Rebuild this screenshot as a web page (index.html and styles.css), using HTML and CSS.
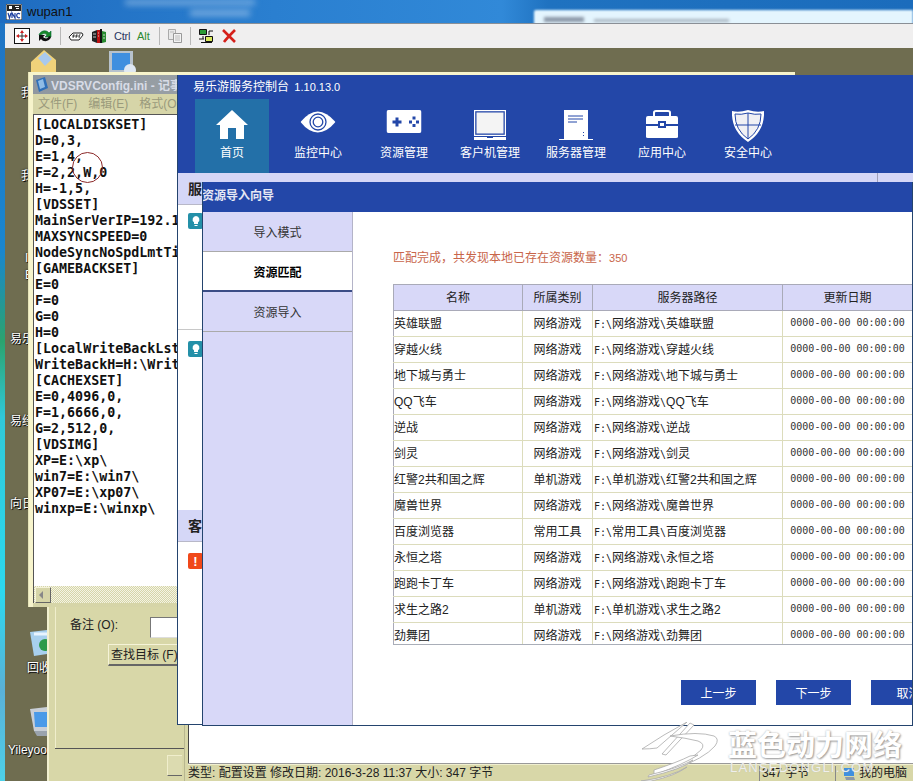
FILE: index.html
```html
<!DOCTYPE html>
<html lang="zh">
<head>
<meta charset="utf-8">
<title>wupan1</title>
<link rel="stylesheet" href="styles.css">
</head>
<body>
<div class="screen">
  <header class="vnc-title">
    <svg class="vnc-logo" viewBox="0 0 16 16" width="16" height="16"><rect width="16" height="16" fill="#fff" stroke="#222"/><path d="M1 1h14v6H1z" fill="#222"/><path d="M3 2h3v3H3zM9 2h4v1H9zM10 4h3v1h-3z" fill="#fff"/><path d="M2 9l1.500 5L5 9M6 14V9l3 5V9M14 10c-2-1.500-4 0-3 2.500 .5 1.500 2 1.500 3 1" fill="none" stroke="#1c3fa0" stroke-width="1.200"/></svg>
    <span class="vnc-name">wupan1</span>
    <span class="blur-a"></span><span class="blur-b"></span>
    <div class="blur-panel"><span></span><span class="wide"></span></div>
  </header>
  <div class="vnc-body">
    <div class="strip"></div>
    <div class="vnc-main">
      <nav class="toolbar">
        <svg class="tb" viewBox="0 0 16 16"><rect x=".5" y=".5" width="15" height="15" fill="#fff" stroke="#111"/><path d="M8 2l2 3H6zM8 14l-2-3h4zM2 8l3-2v4zM14 8l-3 2V6z" fill="#d02020"/><path d="M8 5v6M5 8h6" stroke="#333"/></svg>
        <svg class="tb" viewBox="0 0 16 16"><path d="M2 7c1-4 7-6 10-2l2-2v6H8l2-2C8 5 5 5 4 8z" fill="#1b8a2a" stroke="#063" stroke-width=".6"/><path d="M14 9c-1 4-7 6-10 2l-2 2V7h6L6 9c2 2 5 2 6-1z" fill="#111"/></svg>
        <i class="sep"></i>
        <svg class="tb" viewBox="0 0 16 16"><path d="M1 9l4-4h9l1 2-4 5H3z" fill="#fff" stroke="#222"/><path d="M4 8h7M6 6l-1 4M9 6l-1 4M12 6l-1 4" stroke="#222" stroke-width=".8"/></svg>
        <svg class="tb" viewBox="0 0 16 16"><path d="M1 4l5-2v13l-5-2z" fill="#222"/><path d="M6 2h3v13H6z" fill="#b11"/><path d="M9 1h2v14H9z" fill="#111"/><path d="M11 3l4 1v10l-4 1z" fill="#2a8a30"/><path d="M2 6h3M2 9h3M7 5h1M7 8h1M12 7h2M12 10h2" stroke="#eee" stroke-width=".8"/></svg>
        <span class="key key-ctrl">Ctrl</span>
        <span class="key key-alt">Alt</span>
        <i class="sep"></i>
        <svg class="tb" viewBox="0 0 16 16"><path d="M1.500 1.500h7v10h-7z" fill="#e8e8e8" stroke="#aaa"/><path d="M6.500 5.500h8v9h-8z" fill="#f3f3f3" stroke="#999"/><path d="M8 8h5M8 10h5M8 12h5M3 4h4" stroke="#bbb"/></svg>
        <i class="sep"></i>
        <svg class="tb" viewBox="0 0 16 16"><path d="M1.500 1.500h7v5h-7z" fill="#2a9a35" stroke="#111"/><path d="M7.500 8.500h7v5h-7z" fill="#d8e85a" stroke="#111"/><path d="M1 11h5M11 3h4M11 3v4M5 8v3" stroke="#111"/><path d="M3 14h11v1H3z" fill="#111"/></svg>
        <svg class="tb" viewBox="0 0 16 16"><path d="M2 2l12 12M14 2C10 6 6 10 3 14" stroke="#d5201a" stroke-width="2.600" fill="none"/></svg>
      </nav>
      <div class="remote"></div>
    </div>
  </div>

  <div class="desk-icon di-mail"><svg viewBox="0 0 27 22" width="27" height="22"><path d="M1 12L14 0l12 10v12H1z" fill="#f0d27a"/><path d="M8 8l7-6 7 7-7 7z" fill="#a9c9ee"/></svg></div>
  <div class="desk-icon di-pc"><svg viewBox="0 0 28 22" width="28" height="22"><rect x="1" y="1" width="24" height="21" fill="#b7c2cc"/><rect x="4" y="3" width="18" height="17" fill="#3f8fdf"/><circle cx="22" cy="20" r="6" fill="#dfe8f2"/></svg></div>
  <span class="desk-label dl-1">我</span>
  <span class="desk-label dl-2">我</span>
  <span class="desk-label dl-3">I<br>E</span>
  <span class="desk-label dl-4">易乐</span>
  <span class="desk-label dl-5">易经</span>
  <span class="desk-label dl-6">向日</span>
  <div class="desk-icon di-bin"><svg viewBox="0 0 17 26" width="17" height="26"><path d="M0 2l17-2v24l-13 2z" fill="#a8d0ee"/><circle cx="15" cy="15" r="6" fill="#2c9a4a"/><path d="M4 4h13" stroke="#e8f4ff" stroke-width="3"/></svg></div>
  <span class="desk-label dl-7">回收</span>
  <div class="desk-icon di-pc2"><svg viewBox="0 0 17 30" width="17" height="30"><path d="M0 2l17-2v24H4z" fill="#c8ced6"/><path d="M4 5h13v15H5z" fill="#4a9ae8"/><path d="M4 24h13v5H7z" fill="#9aa3ad"/></svg></div>
  <span class="desk-label dl-8">YileyooC</span>

  <section class="find-dialog">
    <div class="fd-row">
      <label class="fd-label">备注 (O):</label>
      <span class="fd-input"></span>
    </div>
    <button class="fd-btn">查找目标 (F)</button>
    <div class="fd-rule"></div>
    <span class="fd-small"></span>
  </section>

  <section class="explorer">
    <div class="ex-white"></div>
    <footer class="ex-status">
      <span class="ex-s1">类型: 配置设置 修改日期: 2016-3-28 11:37 大小: 347 字节</span>
      <span class="ex-s2">347 字节</span>
      <span class="ex-s3"><svg viewBox="0 0 14 14" width="14" height="14"><rect x="2" y="1" width="10" height="8" fill="#3f8fdf"/><path d="M3 10h9l1 3H4z" fill="#8a98a8"/></svg>我的电脑</span>
    </footer>
  </section>

  <section class="notepad">
    <div class="np-title"><svg viewBox="0 0 13 15" width="13" height="15"><path d="M1 3l9-3 3 11-9 4z" fill="#2f6fb8"/><path d="M3 4l5-2 2 8-5 2z" fill="#8fbce6"/></svg><span>VDSRVConfig.ini - 记事</span></div>
    <div class="np-menu"><span>文件(F)</span><span>编辑(E)</span><span>格式(O)</span></div>
    <pre class="np-text">[LOCALDISKSET]
D=0,3,
E=1,4,
F=2,2,W,0
H=-1,5,
[VDSSET]
MainSerVerIP=192.1
MAXSYNCSPEED=0
NodeSyncNoSpdLmtTi
[GAMEBACKSET]
E=0
F=0
G=0
H=0
[LocalWriteBackLst
WriteBackH=H:\Writ
[CACHEXSET]
E=0,4096,0,
F=1,6666,0,
G=2,512,0,
[VDSIMG]
XP=E:\xp\
win7=E:\win7\
XP07=E:\xp07\
winxp=E:\winxp\</pre>
    <div class="np-scroll"><span class="np-arrow"></span></div>
  </section>
  <div class="ring"></div>

  <section class="console">
    <header class="con-head">
      <div class="con-title">易乐游服务控制台 <span>1.10.13.0</span></div>
      <nav class="con-nav">
        <a class="nav-item active"><svg viewBox="0 0 32 30" width="32" height="30"><path d="M16 0l16 15h-4v14h-8V18h-8v11H4V15H0z" fill="#fff"/></svg><span>首页</span></a>
        <a class="nav-item"><svg viewBox="0 0 35 24" width="35" height="24"><path d="M0 12Q17-9 35 12 17 33 0 12z" fill="#fff"/><circle cx="17.500" cy="12" r="8" fill="none" stroke="#2347a8" stroke-width="1.300"/><circle cx="17.500" cy="12" r="4.800" fill="none" stroke="#2347a8" stroke-width="1.300"/></svg><span>监控中心</span></a>
        <a class="nav-item"><svg viewBox="0 0 35 23" width="35" height="23"><rect width="35" height="23" rx="2" fill="#fff"/><path d="M6 10.500h3V7.500h3v3h3v3h-3v3H9v-3H6z" fill="#2347a8"/><path d="M26 6.500h3v3h-3zM26 14h3v3h-3zM22.500 10.500h3v3h-3zM29.500 10.500h3v3h-3z" fill="#2347a8"/></svg><span>资源管理</span></a>
        <a class="nav-item"><svg viewBox="0 0 32 30" width="32" height="30"><rect x=".6" y=".6" width="30.800" height="24.800" fill="none" stroke="#fff" stroke-width="1.200"/><rect x="2.500" y="2.500" width="27" height="21" fill="#f4f4f4"/><path d="M0 27h13v1h6v-1h13v3H0z" fill="#fff"/></svg><span>客户机管理</span></a>
        <a class="nav-item"><svg viewBox="0 0 34 30" width="34" height="30"><path d="M5 0h24v29H5z" fill="#fff"/><path d="M0 29h34v1H0z" fill="#fff"/><path d="M9 6h15M9 9h15M9 12h9" stroke="#2347a8"/><path d="M24 22h1v1h-1zM24 25h1v1h-1z" fill="#2347a8"/></svg><span>服务器管理</span></a>
        <a class="nav-item"><svg viewBox="0 0 32 29" width="32" height="29"><path d="M8 7V2.500Q8 1 10 1h12q2 0 2 1.500V7" fill="none" stroke="#fff" stroke-width="2"/><path d="M2 6h28q2 0 2 2v6H0V8q0-2 2-2zM0 16h32v11q0 1-2 1H2q-2 0-2-1z" fill="#fff"/><path d="M12 11h8v7h-8z" fill="#2347a8"/><path d="M14 13h4v3h-4z" fill="#fff"/></svg><span>应用中心</span></a>
        <a class="nav-item"><svg viewBox="0 0 32 32" width="32" height="32"><path d="M16 0q9 3 16 1 1 20-16 31Q-1 21 0 1q7 2 16-1z" fill="#fff"/><path d="M16 3q7 2 13 1 0 16-13 25Q3 20 3 4q6 1 13-1z" fill="#f0f0f4" stroke="#2347a8" stroke-width="1"/><path d="M16 3v26M3 15h26" stroke="#2347a8" stroke-width="1"/></svg><span>安全中心</span></a>
      </nav>
    </header>
    <div class="con-section first">
      <h2 class="con-h">服</h2>
      <div class="con-row r1"><span class="badge teal"><svg viewBox="0 0 14 16" width="14" height="16"><path d="M7 3a3.500 3.500 0 0 1 2 6.300V11H5V9.300A3.500 3.500 0 0 1 7 3zM5.500 12h3v1h-3z" fill="#fff"/></svg></span></div>
      <div class="con-row r2"><span class="badge teal"><svg viewBox="0 0 14 16" width="14" height="16"><path d="M7 3a3.500 3.500 0 0 1 2 6.300V11H5V9.300A3.500 3.500 0 0 1 7 3zM5.500 12h3v1h-3z" fill="#fff"/></svg></span></div>
    </div>
    <div class="con-section">
      <h2 class="con-h">客</h2>
      <div class="con-row r3"><span class="badge orange">!</span></div>
    </div>
  </section>

  <section class="wizard">
    <div class="wz-title">资源导入向导</div>
    <div class="wz-body">
      <aside class="wz-side">
        <div class="wz-step">导入模式</div>
        <div class="wz-step on">资源匹配</div>
        <div class="wz-step">资源导入</div>
      </aside>
      <main class="wz-main">
        <p class="wz-msg">匹配完成，共发现本地已存在资源数量：<span>350</span></p>
        <div class="tbl-wrap">
          <table class="tbl">
            <thead><tr><th class="c1">名称</th><th class="c2">所属类别</th><th class="c3">服务器路径</th><th class="c4">更新日期</th></tr></thead>
            <tbody>
              <tr><td>英雄联盟</td><td class="ctr">网络游戏</td><td><i>F:\</i>网络游戏<i>\</i>英雄联盟</td><td class="dt">0000-00-00 00:00:00</td></tr>
              <tr><td>穿越火线</td><td class="ctr">网络游戏</td><td><i>F:\</i>网络游戏<i>\</i>穿越火线</td><td class="dt">0000-00-00 00:00:00</td></tr>
              <tr><td>地下城与勇士</td><td class="ctr">网络游戏</td><td><i>F:\</i>网络游戏<i>\</i>地下城与勇士</td><td class="dt">0000-00-00 00:00:00</td></tr>
              <tr><td>QQ飞车</td><td class="ctr">网络游戏</td><td><i>F:\</i>网络游戏<i>\</i>QQ飞车</td><td class="dt">0000-00-00 00:00:00</td></tr>
              <tr><td>逆战</td><td class="ctr">网络游戏</td><td><i>F:\</i>网络游戏<i>\</i>逆战</td><td class="dt">0000-00-00 00:00:00</td></tr>
              <tr><td>剑灵</td><td class="ctr">网络游戏</td><td><i>F:\</i>网络游戏<i>\</i>剑灵</td><td class="dt">0000-00-00 00:00:00</td></tr>
              <tr><td>红警2共和国之辉</td><td class="ctr">单机游戏</td><td><i>F:\</i>单机游戏<i>\</i>红警2共和国之辉</td><td class="dt">0000-00-00 00:00:00</td></tr>
              <tr><td>魔兽世界</td><td class="ctr">网络游戏</td><td><i>F:\</i>网络游戏<i>\</i>魔兽世界</td><td class="dt">0000-00-00 00:00:00</td></tr>
              <tr><td>百度浏览器</td><td class="ctr">常用工具</td><td><i>F:\</i>常用工具<i>\</i>百度浏览器</td><td class="dt">0000-00-00 00:00:00</td></tr>
              <tr><td>永恒之塔</td><td class="ctr">网络游戏</td><td><i>F:\</i>网络游戏<i>\</i>永恒之塔</td><td class="dt">0000-00-00 00:00:00</td></tr>
              <tr><td>跑跑卡丁车</td><td class="ctr">网络游戏</td><td><i>F:\</i>网络游戏<i>\</i>跑跑卡丁车</td><td class="dt">0000-00-00 00:00:00</td></tr>
              <tr><td>求生之路2</td><td class="ctr">单机游戏</td><td><i>F:\</i>单机游戏<i>\</i>求生之路2</td><td class="dt">0000-00-00 00:00:00</td></tr>
              <tr><td>劲舞团</td><td class="ctr">网络游戏</td><td><i>F:\</i>网络游戏<i>\</i>劲舞团</td><td class="dt">0000-00-00 00:00:00</td></tr>
            </tbody>
          </table>
        </div>
        <div class="wz-btns"><button>上一步</button><button>下一步</button><button>取消</button></div>
      </main>
    </div>
  </section>

  <div class="watermark">
    <svg class="wm-logo" viewBox="0 0 82 60" width="82" height="60"><g fill="#fff" stroke="#aaa" stroke-width=".8"><path d="M47 0L24 13 2 27q8 0 15-1z"/><path d="M50 1L22 32l4 1L54 3z"/><path d="M30 14q28-5 44 0 6 3 1 10-10 12-42 24l-12 2q30-12 40-22 5-6-3-9-12-3-28-5z"/><path d="M14 48q24-8 36-14l8-1q-14 9-44 20z"/><path d="M9 53q30-7 44-15-10 9-45 17z"/><path d="M1 59q30-4 46-14-12 9-36 14z"/></g></svg>
    <div class="wm-text">
      <strong>蓝色动力网络</strong>
      <span>LANSEDONGLI.COM</span>
    </div>
  </div>
</div>
</body>
</html>
```

FILE: styles.css
```css
* { box-sizing: border-box; }
html, body { margin: 0; padding: 0; }
body { font: 12px "Liberation Sans", "Noto Sans CJK SC", sans-serif; color: #222; }
.screen { position: relative; width: 913px; height: 781px; overflow: hidden; display: flex; flex-direction: column; background: #6f6d50; }

/* VNC frame */
.vnc-title { position: relative; flex: none; height: 23px; display: flex; align-items: center; gap: 5px; padding-left: 6px; background: linear-gradient(90deg, #1f6cc0 0, #2a7fd0 30%, #3189d8 55%, #1f72c0 60%, #1b6cbc 100%); overflow: hidden; }
.vnc-logo { flex: none; }
.vnc-name { font-size: 13px; color: #111; }
.blur-a, .blur-b { position: absolute; background: rgba(190,215,240,.55); filter: blur(3px); }
.blur-a { left: 125px; top: 0; width: 130px; height: 5px; }
.blur-b { left: 190px; top: 10px; width: 60px; height: 6px; }
.blur-panel { position: absolute; left: 534px; top: 10px; right: 0; height: 16px; background: #e4f5fe; border-radius: 2px 0 0 0; filter: blur(1px); }
.blur-panel span { position: absolute; left: 10px; top: 7px; width: 40px; height: 5px; background: #8c98a8; filter: blur(1px); }
.blur-panel .wide { left: 60px; width: 135px; height: 3px; top: 9px; background: #a8b4c0; }
.vnc-body { flex: 1; display: flex; min-height: 0; }
.strip { flex: none; width: 5px; background: linear-gradient(180deg, #1f74c4 0, #1a86cf 30%, #2ba36e 42%, #30c8d8 52%, #2cd8ee 75%, #5ab0d8 88%, #4dd0e8 100%); }
.vnc-main { flex: 1; display: flex; flex-direction: column; min-width: 0; }
.toolbar { flex: none; height: 25px; display: flex; align-items: center; gap: 7px; padding-left: 9px; background: #f0efef; border-top: 1px solid #8a8f96; }
.tb { width: 16px; height: 16px; flex: none; }
.sep { flex: none; width: 1px; height: 18px; background: #b8b8b8; }
.key { font-size: 11px; flex: none; }
.key-ctrl { width: 16px; color: #2a3560; letter-spacing: -.2px; }
.key-alt { width: 15px; color: #2c8a30; }
.remote { flex: 1; background: #6f6d50; }

/* Desktop items */
.desk-icon { position: absolute; line-height: 0; }
.di-mail { left: 30px; top: 50px; }
.di-pc { left: 108px; top: 50px; }
.di-bin { left: 30px; top: 630px; }
.di-pc2 { left: 30px; top: 707px; }
.desk-label { position: absolute; color: #fff; white-space: nowrap; text-shadow: 1px 1px 0 #111, 0 0 2px #111; line-height: 17px; }
.dl-1 { left: 21px; top: 85px; }
.dl-2 { left: 21px; top: 168px; }
.dl-3 { left: 25px; top: 250px; }
.dl-4 { left: 10px; top: 331px; }
.dl-5 { left: 10px; top: 413px; }
.dl-6 { left: 10px; top: 496px; }
.dl-7 { left: 27px; top: 660px; }
.dl-8 { left: 8px; top: 742px; }

/* Dialog behind notepad */
.find-dialog { position: absolute; left: 47px; top: 600px; width: 140px; height: 190px; background: #d8d7a8; border-left: 2px solid #f2f0d0; padding: 17px 0 0 21px; }
.fd-row { display: flex; align-items: flex-start; height: 21px; gap: 36px; }
.fd-label { width: 44px; line-height: 16px; white-space: nowrap; color: #222; }
.fd-input { width: 40px; height: 21px; background: #fff; border: 1px solid #777; border-right: 0; border-bottom-color: #ddd; flex: none; }
.fd-btn { display: block; margin: 6px 0 0 38px; width: 80px; height: 22px; padding: 0 0 2px 2px; text-align: left; font: 12px "Liberation Sans", "Noto Sans CJK SC", sans-serif; color: #222; background: #d8d7a8; border: 0; border-top: 1px solid #f5f3d8; border-left: 1px solid #f5f3d8; border-bottom: 2px solid #666; white-space: nowrap; }
.fd-rule { position: absolute; left: 6px; right: 2px; top: 148px; height: 1px; background: #555; }
.find-dialog::before { content: ""; position: absolute; left: 6px; top: 0; height: 148px; width: 1px; background: #f0eecc; }
.fd-small { position: absolute; left: 118px; top: 155px; width: 15px; height: 21px; background: #dcdbb0; border: 1px solid #f0eecc; border-bottom: 1px solid #666; border-right: 0; }

/* Explorer behind */
.explorer { position: absolute; left: 184px; top: 640px; width: 729px; height: 141px; display: flex; flex-direction: column; background: #d8d7a8; padding-left: 3px; border-left: 1px solid #b8b790; }
.ex-white { flex: 1; background: #fff; border-left: 1px solid #444; }
.ex-status { flex: none; height: 18px; display: flex; align-items: flex-start; padding-top: 2px; border-top: 1px solid #999; box-shadow: inset 0 1px 0 #f0efd0; white-space: nowrap; color: #222; line-height: 15px; overflow: hidden; }
.ex-s1 { width: 571px; }
.ex-s2 { width: 76px; padding-left: 2px; border-left: 1px solid #888; }
.ex-s3 { display: flex; align-items: center; gap: 3px; padding-left: 6px; border-left: 1px solid #888; }

/* Notepad */
.notepad { position: absolute; left: 29px; top: 72px; width: 766px; height: 535px; display: flex; flex-direction: column; background: #d6d5a8; border: 1px solid #f7f4cc; border-width: 3px 0 0 4px; box-shadow: -1px 0 0 #e6e4b8; padding-bottom: 4px; }
.np-title { flex: none; height: 19px; display: flex; align-items: center; gap: 3px; padding-left: 2px; background: linear-gradient(90deg, #8f97a0, #aab0ae 60%); color: #d8dce6; font-weight: 700; font-size: 12px; white-space: nowrap; }
.np-menu { flex: none; height: 20px; display: flex; align-items: center; gap: 11px; padding: 0 0 3px 5px; color: #9a9a7c; }
.np-text { flex: 1; margin: 0; padding: 2px 0 0 1px; background: #fff; border-top: 1px solid #555; border-left: 1px solid #555; font: 700 13.33px/16px "DejaVu Sans Mono", monospace; color: #111; overflow: hidden; }
.np-scroll { flex: none; height: 17px; display: flex; align-items: center; padding-left: 1px; border-left: 1px solid #555; background: repeating-conic-gradient(#d6d5a8 0 25%, #f4f4e4 0 50%) 0 0 / 2px 2px; }
.np-arrow { position: relative; width: 16px; height: 16px; background: #d6d5a8; border: 1px solid #f5f3d8; border-right-color: #666; border-bottom-color: #666; }
.np-arrow::after { content: ""; position: absolute; left: 3px; top: 3px; border: 4px solid transparent; border-right-color: #888; border-left: 0; }
.ring { position: absolute; left: 72px; top: 152px; width: 31px; height: 31px; border: 1px solid #8c2a2a; border-radius: 50%; }

/* Console */
.console { position: absolute; left: 177px; top: 75px; width: 736px; height: 650px; display: flex; flex-direction: column; background: #fff; border-left: 1px solid #24446e; border-bottom: 1px solid #24446e; }
.con-head { flex: none; height: 98px; padding: 5px 0 0 15px; background: #2347a8; color: #fff; }
.con-title { height: 14px; line-height: 14px; white-space: nowrap; }
.con-title span { font-size: 11px; margin-left: 2px; }
.con-nav { display: grid; grid-template-columns: repeat(7, 74px); column-gap: 12px; margin: 5px 0 0 2px; }
.nav-item { height: 74px; display: flex; flex-direction: column; align-items: center; justify-content: flex-end; color: #fff; white-space: nowrap; position: relative; padding-bottom: 13px; }
.nav-item svg { position: absolute; left: 50%; top: 11px; transform: translateX(-50%); }
.nav-item.active { background: #2370a8; }
.con-section.first { height: 337px; }
.con-h { position: relative; margin: 0; height: 32px; padding-left: 10px; background: #d5d7f7; border-bottom: 1px solid #b8b8c8; font: 700 14px/30px "Noto Sans CJK SC", sans-serif; color: #222; white-space: nowrap; }
.first .con-h::after { content: ""; position: absolute; left: 699px; top: 0; width: 1px; height: 9px; background: #a0a0b8; }
.con-row { padding: 8px 0 0 10px; }
.r1 { height: 125px; border-bottom: 1px solid #c8c8c8; }
.r2 { padding-top: 11px; }
.r3 { padding-top: 11px; }
.badge { display: flex; align-items: center; justify-content: center; width: 15px; height: 16px; border-radius: 2px; color: #fff; font-weight: 700; font-size: 13px; }
.teal { background: #2490a8; }
.orange { background: #f0481a; }

/* Wizard */
.wizard { position: absolute; left: 202px; top: 182px; width: 711px; height: 544px; display: flex; flex-direction: column; background: #fff; border-left: 1px solid #24446e; border-right: 1px solid #24446e; border-bottom: 1px solid #24446e; overflow: hidden; }
.wz-title { flex: none; height: 30px; line-height: 29px; background: #2347a8; color: #e6e8f4; font-weight: 700; white-space: nowrap; margin-left: -1px; }
.wz-body { flex: 1; display: flex; min-height: 0; }
.wz-side { flex: none; width: 150px; background: #d8d8f8; border-right: 1px solid #b4b4c8; }
.wz-step { height: 40px; line-height: 43px; text-align: center; border-bottom: 1px solid #aaa; color: #333; overflow: hidden; }
.wz-step.on { background: #fff; color: #000; font-weight: 700; border-bottom: 2px solid #3b4d86; }
.wz-main { flex: none; width: 559px; padding: 39px 0 0 40px; }
.wz-msg { margin: 0 0 19px; height: 14px; line-height: 14px; color: #c8654a; white-space: nowrap; }
.wz-msg span { font-size: 11px; }
.tbl-wrap { width: 519px; height: 361px; overflow: hidden; border-bottom: 1px solid #a9aeb8; }
.tbl { table-layout: fixed; width: 519px; border-collapse: collapse; }
.c1 { width: 129px; }
.c2 { width: 70px; }
.c3 { width: 190px; }
.c4 { width: 130px; }
.tbl th { height: 26px; padding: 0 0 2px; background: #d8d8f8; border: 1px solid #a9aab8; font-weight: 400; color: #222; }
.tbl td { height: 26px; padding: 0 0 2px 0; background: #fff; border: 1px solid #dcdcbc; white-space: nowrap; overflow: hidden; color: #222; }
.tbl td:first-child { border-left-color: #a9aab8; }
.tbl .ctr { text-align: center; }
.tbl i { font: 10px "DejaVu Sans Mono", monospace; }
.tbl td:nth-child(3) { padding-left: 1px; }
.tbl .dt { text-align: center; font: 10px "DejaVu Sans Mono", monospace; color: #333; }
.wz-btns { display: flex; gap: 20px; margin: 35px 0 0 288px; width: 300px; }
.wz-btns button { flex: none; width: 75px; height: 25px; padding: 0; border: 0; background: #2347a8; color: #fff; font: 12px "Liberation Sans", "Noto Sans CJK SC", sans-serif; }

/* Watermark */
.watermark { position: absolute; left: 640px; top: 722px; display: flex; pointer-events: none; }
.wm-logo { flex: none; }
.wm-text { margin: 7px 0 0 6px; display: flex; flex-direction: column; white-space: nowrap; }
.wm-text strong { font: 700 29px/29px "Noto Sans CJK SC", sans-serif; color: #fff; text-shadow: 1px 1px 2px #9a9a9a, 0 0 2px #bbb; }
.wm-text span { margin: 3px 0 0 2px; font: 13px/14px "Liberation Sans", sans-serif; letter-spacing: 1.200px; color: rgba(255,255,255,.75); text-shadow: 0 0 1px #bbb; }
```
